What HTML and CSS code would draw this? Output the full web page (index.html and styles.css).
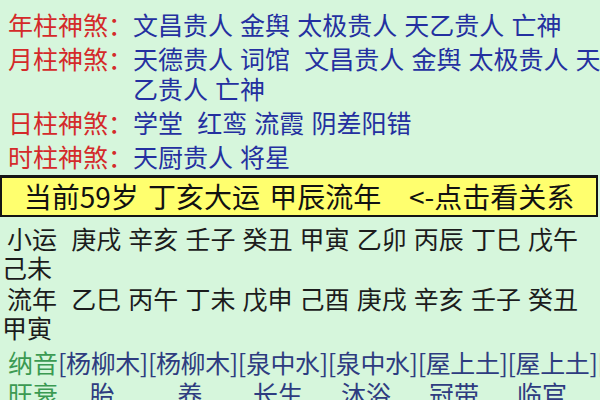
FILE: index.html
```html
<!DOCTYPE html>
<html lang="zh">
<head>
<meta charset="utf-8">
<link rel="stylesheet" href="styles.css">
</head>
<body>
<div class="shensha">
  <div class="row"><span class="label">年柱神煞：</span><span class="value">文昌贵人 金舆 太极贵人 天乙贵人 亡神</span></div>
  <div class="row"><span class="label">月柱神煞：</span><span class="value">天德贵人 词馆&nbsp; 文昌贵人 金舆 太极贵人 天<br>乙贵人 亡神</span></div>
  <div class="row"><span class="label">日柱神煞：</span><span class="value">学堂&nbsp; 红鸾 流霞 阴差阳错</span></div>
  <div class="row"><span class="label">时柱神煞：</span><span class="value">天厨贵人 将星</span></div>
</div>
<div class="yunbar">当前59岁 丁亥大运 甲辰流年&nbsp;&nbsp; &lt;-点击看关系</div>
<div class="years">
  <div class="yline">小运&nbsp; 庚戌 辛亥 壬子 癸丑 甲寅 乙卯 丙辰 丁巳 戊午<br>己未</div>
  <div class="yline second">流年&nbsp; 乙巳 丙午 丁未 戊申 己酉 庚戌 辛亥 壬子 癸丑<br>甲寅</div>
</div>
<div class="table">
  <div class="trow"><span class="tlabel">纳音</span><span class="cell">[杨柳木]</span><span class="cell">[杨柳木]</span><span class="cell">[泉中水]</span><span class="cell">[泉中水]</span><span class="cell">[屋上土]</span><span class="cell">[屋上土]</span><span class="cell">[</span></div>
  <div class="trow"><span class="tlabel">旺衰</span><span class="cell mid">胎</span><span class="cell mid">养</span><span class="cell mid">长生</span><span class="cell mid">沐浴</span><span class="cell mid">冠带</span><span class="cell mid">临官</span></div>
</div>
</body>
</html>
```
FILE: styles.css
```css
html, body {
  margin: 0;
  padding: 0;
}
body {
  width: 600px;
  height: 400px;
  overflow: hidden;
  background: #d6f6dc;
  font-family: "Noto Sans CJK SC", "Noto Sans", sans-serif;
  font-size: 25px;
  word-spacing: 1.5px;
}
.shensha {
  padding: 9px 0 0 8px;
}
.row {
  display: flex;
  line-height: 30px;
  margin-bottom: 4px;
}
.label {
  color: #d42a2a;
  flex: none;
  white-space: nowrap;
}
.value {
  color: #2430a0;
  white-space: nowrap;
}
.yunbar {
  width: 594px;
  background: #ffff6e;
  border: 2px solid #151515;
  border-top-width: 3px;
  color: #111;
  font-size: 28px;
  line-height: 37px;
  text-align: center;
  white-space: nowrap;
  word-spacing: 3px;
}
.years {
  padding: 7px 0 0 2px;
  color: #1c1c1c;
}
.yline {
  line-height: 29px;
  text-indent: 5px;
  white-space: nowrap;
}
.yline.second {
  margin-top: 2px;
}
.table {
  padding: 5px 0 0 8px;
}
.trow {
  display: flex;
  line-height: 31px;
  white-space: nowrap;
}
.tlabel {
  color: #3b9a52;
  flex: none;
}
.cell {
  color: #2e3c80;
  flex: none;
  letter-spacing: -0.4px;
}
.cell.mid {
  width: 88px;
  text-align: center;
  letter-spacing: 0;
}
```
